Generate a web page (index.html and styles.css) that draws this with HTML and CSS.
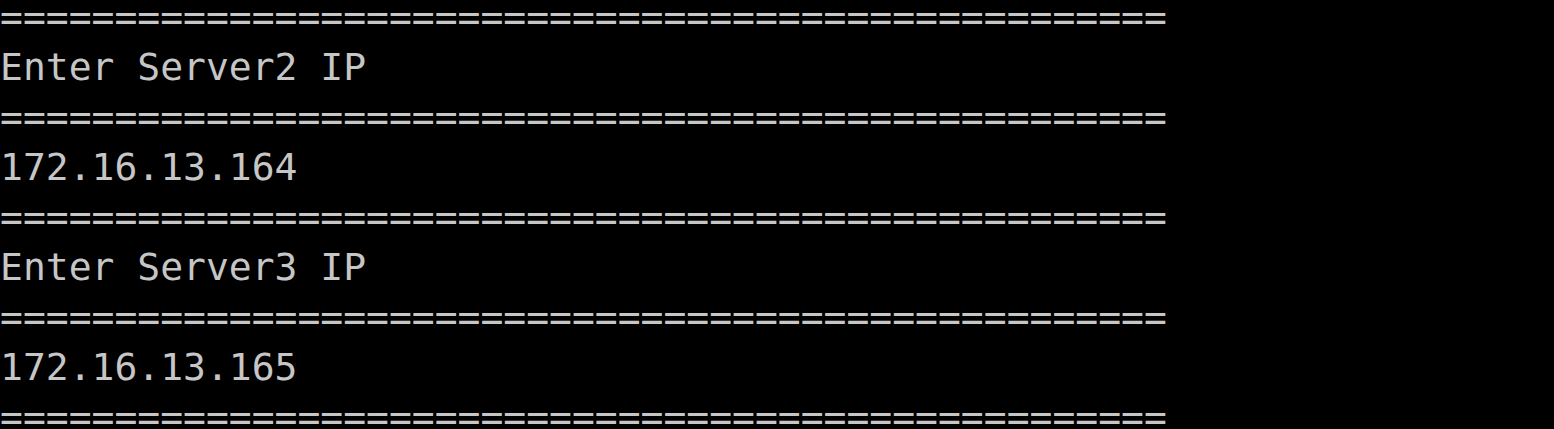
FILE: index.html
```html
<!DOCTYPE html>
<html>
<head>
<meta charset="utf-8">
<link rel="stylesheet" href="styles.css">
</head>
<body>
<pre class="console">===================================================
Enter Server2 IP
===================================================
172.16.13.164
===================================================
Enter Server3 IP
===================================================
172.16.13.165
===================================================</pre>
</body>
</html>
```
FILE: styles.css
```css
html, body {
  margin: 0;
  padding: 0;
  background: #000;
  overflow: hidden;
}
.console {
  margin: -8px 0 0 0;
  padding: 0;
  font-family: "DejaVu Sans Mono", monospace;
  font-size: 38px;
  line-height: 50px;
  color: #c6c6c6;
  white-space: pre;
}
```
